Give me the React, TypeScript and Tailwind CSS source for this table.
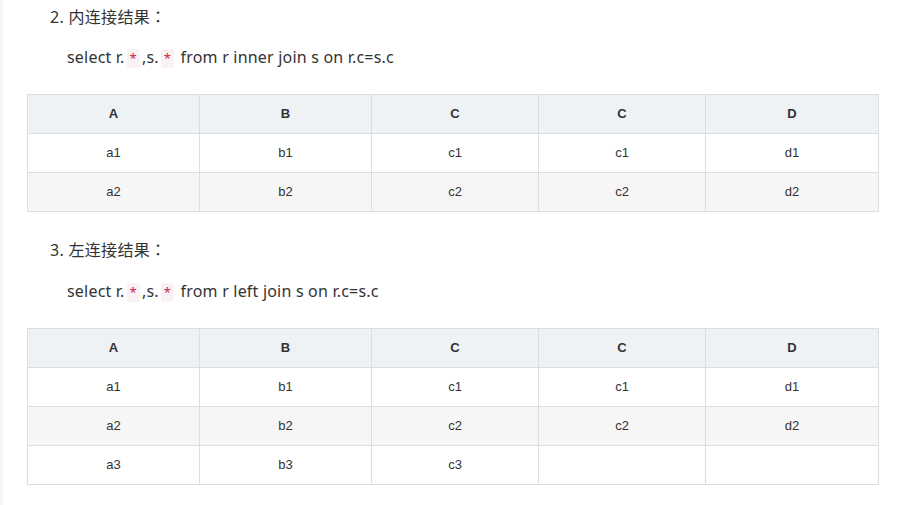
const cols = "grid grid-cols-[172px_172px_167px_167px_173px]";

function Code({ children }: { children: React.ReactNode }) {
  return (
    <span className="mx-[2px] inline-block h-[19px] rounded-[2px] bg-[#f9f2f4] px-[3px] align-middle text-[13px] leading-[19px] text-[#c7254e]">
      {children}
    </span>
  );
}

function DataTable({ rows }: { rows: string[][] }) {
  const head = ["A", "B", "C", "C", "D"];
  return (
    <div className="ml-[24px] w-[852px] border-l border-t border-[#dddddd] font-['Liberation_Sans',Arial,sans-serif] text-[13px] text-[#333]">
      <div className={`${cols} bg-[#eef2f5] font-bold`}>
        {head.map((h, i) => (
          <div key={i} className="flex h-[39px] items-center justify-center border-b border-r border-[#dddddd]">
            {h}
          </div>
        ))}
      </div>
      {rows.map((r, ri) => (
        <div key={ri} className={`${cols} ${ri % 2 === 1 ? "bg-[#f6f6f6]" : "bg-white"}`}>
          {r.map((c, ci) => (
            <div key={ci} className="flex h-[39px] items-center justify-center border-b border-r border-[#dddddd]">
              {c}
            </div>
          ))}
        </div>
      ))}
    </div>
  );
}

function Section({
  n,
  title,
  join,
  rows,
  gap,
}: {
  n: number;
  title: string;
  join: string;
  rows: string[][];
  gap: string;
}) {
  return (
    <div>
      <div className="h-[26px] pl-[47px] text-[16px] leading-[26px] tracking-[0.3px]">
        {n}. {title}
        <span className="font-['Noto_Sans_CJK_TC',sans-serif] leading-none">：</span>
      </div>
      <p className={`${gap} h-[26px] pl-[64px] text-[16px] leading-[26px] tracking-[0.2px]`}>
        select r.<Code>*</Code>,s.<Code>*</Code> from r {join} join s on r.c=s.c
      </p>
      <div className="mt-[24px]">
        <DataTable rows={rows} />
      </div>
    </div>
  );
}

export default function App() {
  return (
    <div className="flex h-[505px] w-[899px] overflow-hidden bg-white">
      <div className="w-[3px] shrink-0 bg-[#f4f5f7]" />
      <div className="flex-1 pt-[4px] font-['Noto_Sans','Noto_Sans_CJK_SC',sans-serif] text-[#333]">
        <Section
          n={2}
          title="内连接结果"
          join="inner"
          gap="mt-[14px]"
          rows={[
            ["a1", "b1", "c1", "c1", "d1"],
            ["a2", "b2", "c2", "c2", "d2"],
          ]}
        />
        <div className="mt-[25px]">
          <Section
            n={3}
            title="左连接结果"
            join="left"
            gap="mt-[15px]"
            rows={[
              ["a1", "b1", "c1", "c1", "d1"],
              ["a2", "b2", "c2", "c2", "d2"],
              ["a3", "b3", "c3", "", ""],
            ]}
          />
        </div>
      </div>
    </div>
  );
}
